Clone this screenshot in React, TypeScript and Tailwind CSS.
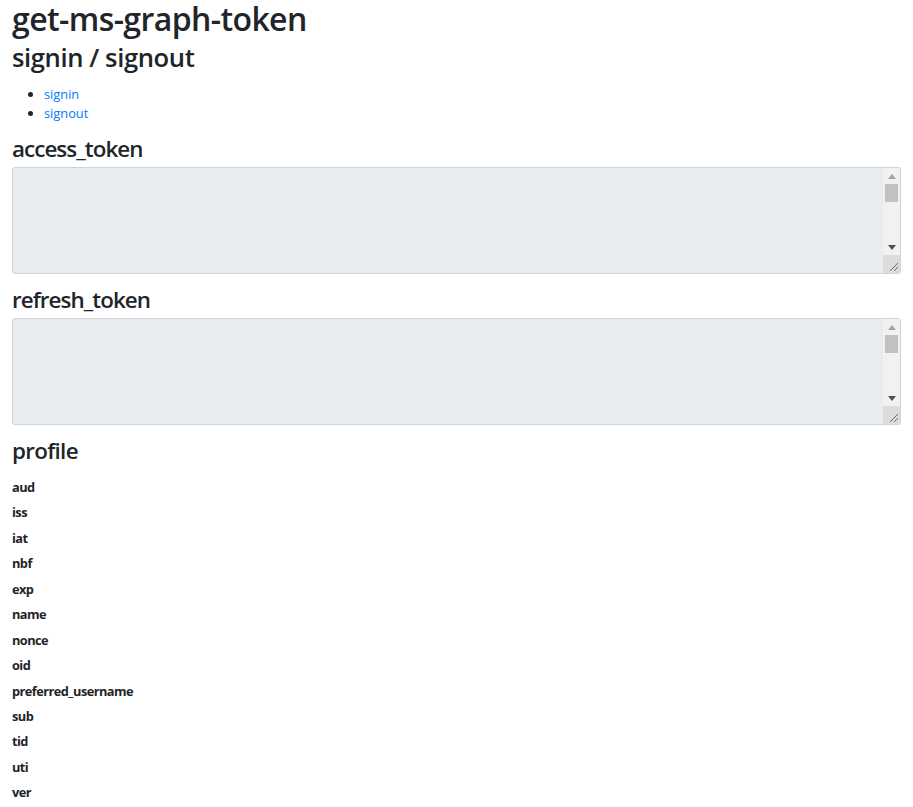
const FIELDS = [
  "aud",
  "iss",
  "iat",
  "nbf",
  "exp",
  "name",
  "nonce",
  "oid",
  "preferred_username",
  "sub",
  "tid",
  "uti",
  "ver",
];

function FakeScrollbar() {
  return (
    <div className="flex w-[17px] shrink-0 flex-col bg-[#f1f1f1]">
      <div className="flex h-[16px] items-center justify-center">
        <svg width="8" height="5" viewBox="0 0 8 5">
          <path d="M4 0 L8 5 L0 5 Z" fill="#a3a3a3" />
        </svg>
      </div>
      <div className="mx-[2px] h-[18px] bg-[#c1c1c1]" />
      <div className="flex-1" />
      <div className="flex h-[16px] items-center justify-center">
        <svg width="8" height="5" viewBox="0 0 8 5">
          <path d="M0 0 L8 0 L4 5 Z" fill="#505050" />
        </svg>
      </div>
      <div className="relative h-[18px] bg-[#dcdcdc]">
        <svg className="absolute bottom-[2px] right-[2px]" width="10" height="10" viewBox="0 0 10 10">
          <path d="M10 2 L2 10 M10 6 L6 10" stroke="#6b6b6b" strokeWidth="1" />
        </svg>
      </div>
    </div>
  );
}

function TokenBox({ label }: { label: string }) {
  return (
    <div className="mb-[12.8px]">
      <h3 className="mb-[4.4px] text-[22.4px] font-semibold leading-[1.2] tracking-[-0.95px]">{label}</h3>
      <div className="flex h-[107px] overflow-hidden rounded-[3px] border border-[#ced4da] bg-[#e9ecef]">
        <div className="flex-1" />
        <FakeScrollbar />
      </div>
    </div>
  );
}

export default function App() {
  return (
    <div
      className="min-h-screen bg-white px-[12px] text-[12.8px] leading-[1.5] text-[#212529]"
      style={{ fontFamily: '"Open Sans", "Noto Sans", sans-serif' }}
    >
      <h1 className="mb-[4.4px] text-[32px] font-semibold leading-[1.2] tracking-[-0.6px]">get-ms-graph-token</h1>
      <h2 className="mb-[11.4px] text-[25.6px] font-semibold leading-[1.2] tracking-[-0.4px]">signin / signout</h2>
      <ul className="mb-[12.8px] list-disc pl-[32px]">
        <li>
          <a href="#" className="text-[#007bff]">signin</a>
        </li>
        <li>
          <a href="#" className="text-[#007bff]">signout</a>
        </li>
      </ul>
      <TokenBox label="access_token" />
      <TokenBox label="refresh_token" />
      <h3 className="mb-[6.4px] text-[22.4px] font-semibold leading-[1.2] tracking-[-0.7px]">profile</h3>
      <dl className="mt-[13px]">
        {FIELDS.map((f) => (
          <div key={f}>
            <dt className="font-bold tracking-[-0.55px]">{f}</dt>
            <dd className="mb-[6.25px]" />
          </div>
        ))}
      </dl>
    </div>
  );
}
